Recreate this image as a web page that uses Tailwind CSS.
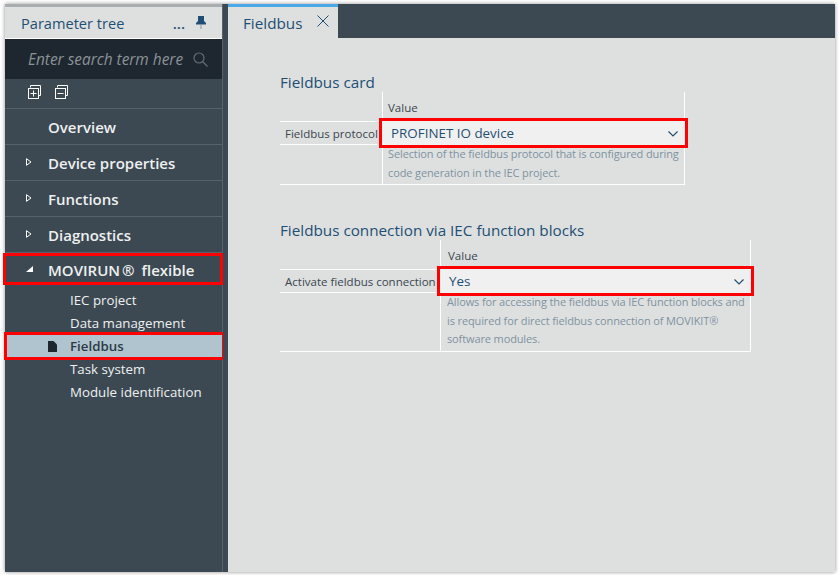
<!DOCTYPE html>
<html lang="en">
<head>
    <meta charset="UTF-8">
    <title>Fieldbus - Parameter tree</title>
    <script src="https://cdn.jsdelivr.net/npm/@tailwindcss/browser@4"></script>
</head>
<body class="bg-white h-[575px] w-[839px] overflow-hidden font-['Open_Sans',sans-serif]">
    <div class="ml-[5px] mt-[4px] w-[830px] h-[568px] flex bg-[#dee0df] shadow-[0_0_4px_rgba(0,0,0,0.45)]">
        <!-- Sidebar -->
        <div class="w-[218px] shrink-0 flex flex-col bg-[#3c4953] border-r border-[#55626c]">
            <div class="h-[35px] shrink-0 bg-[#dee0df] border-t-[3px] border-[#a8adaf] border-b border-b-white flex items-center pl-[16px] pr-[16px] text-[#1f4f74]">
                <span class="text-[14.6px] mt-[2px]">Parameter tree</span>
                <span class="ml-auto text-[15px] leading-none mt-[1px] mr-[11px] font-semibold">...</span>
                <svg class="w-[10px] h-[13px] mb-[1px]" viewBox="0 0 10 13" fill="#1f4f74"><path d="M2 0h6v5l2 2v1.500H0V7l2-2z"/><rect x="4.500" y="8" width="1" height="5" fill="#7d97aa"/></svg>
            </div>
            <div class="h-[40px] shrink-0 bg-[#1e272f] flex items-center pl-[23px] pr-[14px]">
                <span class="italic text-[15.4px] text-[#8b9297] mt-[2px]">Enter search term here</span>
                <svg class="ml-auto w-[15px] h-[15px]" viewBox="0 0 15 15" fill="none" stroke="#626c73" stroke-width="1.200"><circle cx="6" cy="6" r="5"/><path d="M9.500 9.500l5 5"/></svg>
            </div>
            <div class="h-[30px] shrink-0 flex items-start pt-[6px] pl-[23px] gap-[14px] border-b border-[#55626c]">
                <svg class="w-[13px] h-[14px]" viewBox="0 0 13 14" fill="none" stroke="#fff" stroke-width="1"><path d="M2.500 2.500v-2h10v10h-2"/><rect x="0.500" y="3.500" width="10" height="10" fill="#3c4953"/><path d="M5.500 5.500v6M2.500 8.500h6"/></svg>
                <svg class="w-[13px] h-[14px]" viewBox="0 0 13 14" fill="none" stroke="#fff" stroke-width="1"><path d="M2.500 2.500v-2h10v10h-2"/><rect x="0.500" y="3.500" width="10" height="10" fill="#3c4953"/><path d="M2.500 8.500h6"/></svg>
            </div>
            <div class="h-[36px] shrink-0 flex items-center pl-[43px] pt-[2px] border-b border-[#55626c] text-[#eef0f0] font-semibold text-[15px]">Overview</div>
            <div class="h-[36px] shrink-0 flex items-center pt-[2px] border-b border-[#55626c] text-[#eef0f0] font-semibold text-[15px]">
                <svg class="w-[6px] h-[8px] ml-[21px] mr-[16px] mb-[4px]" viewBox="0 0 6 8" fill="none" stroke="#fff"><path d="M.5.700 5 4 .5 7.300z"/></svg>Device properties
            </div>
            <div class="h-[36px] shrink-0 flex items-center pt-[2px] border-b border-[#55626c] text-[#eef0f0] font-semibold text-[15px]">
                <svg class="w-[6px] h-[8px] ml-[21px] mr-[16px] mb-[4px]" viewBox="0 0 6 8" fill="none" stroke="#fff"><path d="M.5.700 5 4 .5 7.300z"/></svg>Functions
            </div>
            <div class="h-[36px] shrink-0 flex items-center pt-[2px] border-b border-[#55626c] text-[#eef0f0] font-semibold text-[15px]">
                <svg class="w-[6px] h-[8px] ml-[21px] mr-[16px] mb-[4px]" viewBox="0 0 6 8" fill="none" stroke="#fff"><path d="M.5.700 5 4 .5 7.300z"/></svg>Diagnostics
            </div>
            <div class="h-[26px] mt-[3px] ml-[1px] w-[214px] shrink-0 flex items-center pt-[2px] text-[#eef0f0] font-semibold text-[15px] outline-3 outline-[#f00]">
                <svg class="w-[7px] h-[6px] ml-[20px] mr-[15px] mb-[3px]" viewBox="0 0 7 6" fill="#fff"><path d="M7 0v6H0z"/></svg>MOVIRUN<span class="ml-[2px]">®</span><span class="ml-[7px]">flexible</span>
            </div>
            <div class="mt-[7px] flex flex-col text-[13.3px] text-[#eef0f0]">
                <div class="h-[23px] flex items-center pl-[65px]">IEC project</div>
                <div class="h-[23px] flex items-center pl-[65px]">Data management</div>
                <div class="h-[22px] mb-[1px] ml-[2px] w-[215px] flex items-center pt-[1px] bg-[#b0c4d0] text-[#2c3a45] outline-3 outline-[#f00] font-semibold">
                    <svg class="w-[9px] h-[11px] ml-[41px] mr-[13px] mb-[1px]" viewBox="0 0 9 11" fill="#1e272f"><path d="M0 0h5.500L9 3.500V11H0z"/></svg>Fieldbus
                </div>
                <div class="h-[23px] flex items-center pl-[65px]">Task system</div>
                <div class="h-[23px] flex items-center pl-[65px]">Module identification</div>
            </div>
        </div>

        <!-- Main -->
        <div class="flex-1 flex flex-col border-l-[5px] border-[#3c4953] min-w-0">
            <div class="h-[34px] shrink-0 bg-[#3c4953] flex">
                <div class="w-[110px] bg-[#dee0df] border-t-[3px] border-[#4aa8e4] flex items-center pl-[15px] text-[#1f4f74]">
                    <span class="text-[15.25px] mt-[2px]">Fieldbus</span>
                    <svg class="w-[12px] h-[12px] ml-[15px] mb-[4px]" viewBox="0 0 12 12" fill="none" stroke="#1f4f74" stroke-width="1"><path d="M.5.500l11 11M11.500.500l-11 11"/></svg>
                </div>
            </div>
            <div class="pl-[52px] pt-[34px]">
                <h2 class="text-[15.25px] leading-[20px] text-[#1f4f74]">Fieldbus card</h2>
                <div class="grid grid-cols-[102px_303px] w-[405px] text-[11.5px] border-b border-white">
                    <div></div>
                    <div class="h-[29px] pl-[5px] pt-[2px] flex items-center text-[#3a4650] border-l border-r border-white">Value</div>
                    <div class="h-[24px] flex items-center pl-[5px] pt-[2px] text-[#3a4650] border-t border-b border-white">Fieldbus protocol</div>
                    <div class="h-[24px] bg-[#f0f0f0] outline-3 outline-[#f00] flex items-center pl-[9px] pr-[7px] pt-[1px] text-[#1f4f74] text-[13.4px] z-10">
                        PROFINET IO device
                        <svg class="ml-auto w-[10px] h-[6px]" viewBox="0 0 10 6" fill="none" stroke="#1f4f74" stroke-width="1.200"><path d="M.5.500 5 5 9.500.500"/></svg>
                    </div>
                    <div></div>
                    <div class="h-[39px] pl-[5px] border-l border-r border-white text-[#7e93a2] text-[11px] leading-[18.5px] tracking-[-0.12px]">Selection of the fieldbus protocol that is configured during code generation in the IEC project.</div>
                </div>

                <h2 class="mt-[35px] text-[15.25px] leading-[20px] text-[#1f4f74]">Fieldbus connection via IEC function blocks</h2>
                <div class="grid grid-cols-[160px_311px] w-[471px] text-[11.5px] border-b border-white">
                    <div></div>
                    <div class="h-[29px] pl-[7px] pt-[2px] flex items-center text-[#3a4650] border-l border-r border-white">Value</div>
                    <div class="h-[24px] flex items-center pl-[5px] pt-[2px] text-[#3a4650] border-t border-b border-white whitespace-nowrap">Activate fieldbus connection</div>
                    <div class="h-[24px] bg-[#f0f0f0] outline-3 outline-[#f00] flex items-center pl-[9px] pr-[7px] pt-[1px] text-[#1f4f74] text-[13.4px] z-10">
                        Yes
                        <svg class="ml-auto w-[10px] h-[6px]" viewBox="0 0 10 6" fill="none" stroke="#1f4f74" stroke-width="1.200"><path d="M.5.500 5 5 9.500.500"/></svg>
                    </div>
                    <div></div>
                    <div class="h-[58px] pl-[6px] pr-[4px] border-l border-r border-white text-[#7e93a2] text-[11px] leading-[18.5px] tracking-[-0.12px]">Allows for accessing the fieldbus via IEC function blocks and is required for direct fieldbus connection of MOVIKIT® software modules.</div>
                </div>
            </div>
        </div>
    </div>
</body>
</html>
